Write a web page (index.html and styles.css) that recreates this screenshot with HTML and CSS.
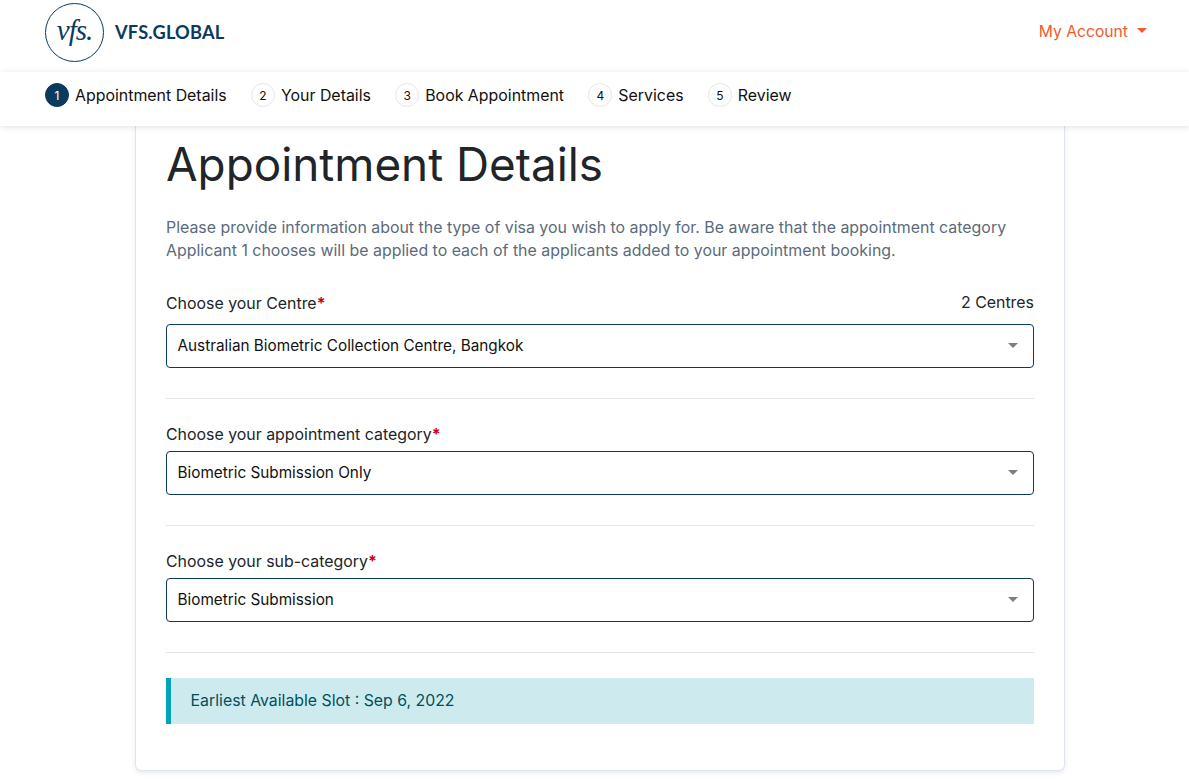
FILE: index.html
```html
<!DOCTYPE html>
<html lang="en">
<head>
<meta charset="utf-8">
<title>Appointment Details</title>
<link rel="stylesheet" href="styles.css">
</head>
<body>
<header class="topbar">
  <a class="brand">
    <span class="brand-mark">vfs.</span>
    <span class="brand-name">VFS.GLOBAL</span>
  </a>
  <a class="account">My Account<span class="caret caret-account"></span></a>
</header>
<nav class="steps">
  <div class="step step-active"><span class="step-num">1</span><span>Appointment Details</span></div>
  <div class="step"><span class="step-num">2</span><span>Your Details</span></div>
  <div class="step"><span class="step-num">3</span><span>Book Appointment</span></div>
  <div class="step"><span class="step-num">4</span><span>Services</span></div>
  <div class="step"><span class="step-num">5</span><span>Review</span></div>
</nav>
<main class="page">
  <section class="card">
    <h1 class="title">Appointment Details</h1>
    <p class="intro">Please provide information about the type of visa you wish to apply for. Be aware that the appointment category Applicant 1 chooses will be applied to each of the applicants added to your appointment booking.</p>
    <div class="field">
      <div class="field-head field-head-count"><label class="label">Choose your Centre<span class="req">*</span></label><span class="count">2 Centres</span></div>
      <div class="select"><span>Australian Biometric Collection Centre, Bangkok</span><span class="caret caret-select"></span></div>
    </div>
    <div class="field">
      <div class="field-head"><label class="label">Choose your appointment category<span class="req">*</span></label></div>
      <div class="select"><span>Biometric Submission Only</span><span class="caret caret-select"></span></div>
    </div>
    <div class="field">
      <div class="field-head"><label class="label">Choose your sub-category<span class="req">*</span></label></div>
      <div class="select"><span>Biometric Submission</span><span class="caret caret-select"></span></div>
    </div>
    <div class="alert">Earliest Available Slot : Sep 6, 2022</div>
  </section>
</main>
</body>
</html>
```
FILE: styles.css
```css
* { box-sizing: border-box; }
html, body { margin: 0; height: 780px; overflow: hidden; }
body { background: #fff; font-family: Inter, "Liberation Sans", sans-serif; font-size: 16px; color: #212529; }

.topbar { height: 72px; display: flex; align-items: center; justify-content: space-between; padding: 0 42px 8px 45px; background: #fff; box-shadow: 0 0 4px rgba(0,0,0,.08); position: relative; }
.brand { display: flex; align-items: center; gap: 11px; }
.brand-mark { width: 59px; height: 59px; border: 1.5px solid #0b3a5f; border-radius: 50%; display: flex; align-items: center; justify-content: center; font-family: "Liberation Serif", serif; font-style: italic; font-size: 29px; color: #0b3a5f; letter-spacing: -1px; padding-bottom: 4px; }
.brand-name { font-family: Lato, sans-serif; font-weight: 700; font-size: 18.2px; color: #0b3a5f; letter-spacing: .2px; }
.account { display: flex; align-items: center; color: #f4582c; font-size: 15.7px; margin-bottom: 2px; }
.caret { width: 0; height: 0; border-left: 5px solid transparent; border-right: 5px solid transparent; border-top: 5px solid; }
.caret-account { margin-left: 9px; color: #f4582c; margin-bottom: 2px; }

.steps { height: 54px; display: flex; align-items: center; gap: 24.3px; padding: 0 45px 8px; background: #fff; box-shadow: 0 1px 6px rgba(0,0,0,.12); position: relative; z-index: 1; font-size: 15.9px; }
.step { display: flex; align-items: center; gap: 6px; color: #111; }
.step-num { width: 24px; height: 24px; border: 1px solid #e4e6e9; border-radius: 50%; display: flex; align-items: center; justify-content: center; font-size: 12px; }
.step-active .step-num { background: #0b3a5f; border-color: #0b3a5f; color: #fff; }

.page { display: flex; justify-content: center; padding-left: 11px; }
.card { width: 930px; height: 645px; padding: 0 30px; background: #fff; border: 1px solid #dee5ee; border-top: 0; border-radius: 0 0 6px 6px; box-shadow: 0 2px 5px rgba(60,90,130,.12); }
.title { margin: 10px 0 0; font-size: 45.8px; font-weight: 400; line-height: 58px; color: #212529; }
.intro { margin: 22px 0 0; line-height: 23px; color: #5b6b7b; font-size: 15.92px; }

.field { padding-bottom: 30px; border-bottom: 1px solid #e1e5ea; }
.field:first-of-type { margin-top: 32px; }
.field + .field { margin-top: 26px; }
.field-head { display: flex; justify-content: space-between; align-items: flex-start; height: 19px; margin-bottom: 7px; line-height: 19px; font-size: 15.9px; }
.field-head-count { margin-bottom: 11px; }
.count { line-height: 17px; }
.req { color: #c40018; font-weight: 700; }
.select { height: 44px; display: flex; align-items: center; justify-content: space-between; padding: 0 15px 2px 10.5px; border: 1px solid #0b3a5f; border-radius: 4px; color: #111; font-size: 15.3px; }
.caret-select { color: #7f7f7f; }

.alert { margin-top: 25px; height: 46px; display: flex; align-items: center; padding: 0 0 2px 19.6px; background: #cdeaef; border-left: 5px solid #00a4b8; color: #00505c; font-size: 15.85px; }
```
